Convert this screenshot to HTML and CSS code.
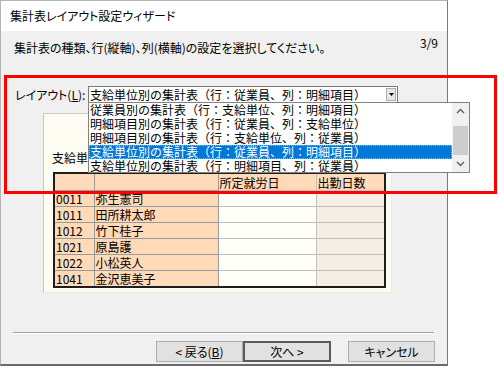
FILE: index.html
```html
<!DOCTYPE html>
<html lang="ja">
<head>
    <meta charset="UTF-8">
    <title>集計表レイアウト設定ウィザード</title>
    <link rel="stylesheet" href="styles.css">
</head>
<body>
    <div class="dialog">
        <div class="titlebar">集計表レイアウト設定ウィザード</div>

        <div class="panel-body">
            <div class="intro">
                <span class="intro-text">集計表の種類、行(縦軸)、列(横軸)の設定を選択してください。</span>
                <span class="step">3/9</span>
            </div>

            <div class="layout-row">
                <label class="layout-label">レイアウト(<u>L</u>):</label>
                <div class="combo">
                    <span class="combo-text">支給単位別の集計表（行：従業員、列：明細項目）</span>
                    <span class="combo-btn">
                        <svg width="5" height="3" viewBox="0 0 5 3"><path d="M0 0H5L2.5 3Z" fill="#000"/></svg>
                    </span>

                    <div class="droplist">
                        <ul class="items">
                            <li>従業員別の集計表（行：支給単位、列：明細項目）</li>
                            <li>明細項目別の集計表（行：従業員、列：支給単位）</li>
                            <li>明細項目別の集計表（行：支給単位、列：従業員）</li>
                            <li class="selected">支給単位別の集計表（行：従業員、列：明細項目）</li>
                            <li>支給単位別の集計表（行：明細項目、列：従業員）</li>
                        </ul>
                        <div class="scrollbar">
                            <span class="arrow">
                                <svg width="9" height="6" viewBox="0 0 9 6"><path d="M1 5L4.5 1.5L8 5" fill="none" stroke="#606060" stroke-width="1.4"/></svg>
                            </span>
                            <span class="thumb"></span>
                            <span class="arrow">
                                <svg width="9" height="6" viewBox="0 0 9 6"><path d="M1 1L4.5 4.5L8 1" fill="none" stroke="#606060" stroke-width="1.4"/></svg>
                            </span>
                        </div>
                    </div>
                </div>
            </div>

            <div class="preview">
                <div class="preview-title">支給単位別の集計表</div>
                <table class="grid">
                    <colgroup>
                        <col class="c-code"><col class="c-name"><col class="c-day"><col class="c-cnt">
                    </colgroup>
                    <tr class="head">
                        <td class="key"></td><td class="key"></td><td>所定就労日</td><td>出勤日数</td>
                    </tr>
                    <tr><td class="key">0011</td><td class="key">弥生憲司</td><td class="val"></td><td class="val2"></td></tr>
                    <tr><td class="key">1011</td><td class="key">田所耕太郎</td><td class="val"></td><td class="val2"></td></tr>
                    <tr><td class="key">1012</td><td class="key">竹下桂子</td><td class="val"></td><td class="val2"></td></tr>
                    <tr><td class="key">1021</td><td class="key">原島護</td><td class="val"></td><td class="val2"></td></tr>
                    <tr><td class="key">1022</td><td class="key">小松英人</td><td class="val"></td><td class="val2"></td></tr>
                    <tr><td class="key">1041</td><td class="key">金沢恵美子</td><td class="val"></td><td class="val2"></td></tr>
                </table>
            </div>

            <div class="separator"></div>

            <div class="buttons">
                <button type="button" class="btn">&lt; 戻る(<u>B</u>)</button>
                <button type="button" class="btn btn-default">次へ &gt;</button>
                <button type="button" class="btn btn-cancel">キャンセル</button>
            </div>
        </div>
    </div>

    <div class="highlight"></div>
</body>
</html>
```

FILE: styles.css
```css
body {
    margin: 0;
    background-color: #fff;
    font-family: "Noto Sans CJK JP", "Noto Sans", sans-serif;
    font-size: 12px;
    color: #000;
    position: relative;
    width: 498px;
    height: 367px;
    overflow: hidden;
}
.dialog {
    width: 448px;
    height: 366px;
    box-sizing: border-box;
    border-left: 1px solid #b4b4b4;
    border-top: 1px solid #b4b4b4;
    border-right: 1px solid #7a7a7a;
    border-bottom: 2px solid #6a6a6a;
    display: flex;
    flex-direction: column;
}
.titlebar {
    height: 30px;
    line-height: 30px;
    padding-left: 9px;
    background-color: #fff;
    font-feature-settings: "palt";
}
.panel-body {
    flex: 1;
    background-color: #f0f0f0;
}
.intro {
    display: flex;
    justify-content: space-between;
    padding: 3px 9px 0 13px;
    font-feature-settings: "palt";
}
.intro-text {
    margin-top: 5px;
    line-height: 17px;
}
.step {
    line-height: 17px;
}
.layout-row {
    display: flex;
    align-items: center;
    margin-top: 30px;
    padding-left: 14px;
}
.layout-label {
    width: 73px;
    font-feature-settings: "palt";
}
.combo {
    position: relative;
    width: 310px;
    height: 17px;
    box-sizing: border-box;
    border: 1px solid #7a7a7a;
    background-color: #fff;
    display: flex;
    align-items: center;
    z-index: 2;
}
.combo-text {
    padding-left: 1px;
    line-height: 15px;
    white-space: nowrap;
}
.combo-btn {
    margin-left: auto;
    margin-right: 1px;
    width: 10px;
    height: 13px;
    box-sizing: border-box;
    border: 1px solid #adadad;
    background-color: #e6e6e6;
    display: flex;
    align-items: center;
    justify-content: center;
}
.droplist {
    position: absolute;
    left: -1px;
    top: 15px;
    width: 382px;
    height: 71px;
    box-sizing: border-box;
    border: 1px solid #828282;
    background-color: #fff;
    display: flex;
}
.items {
    list-style: none;
    margin: 0;
    padding: 0;
    width: 363px;
}
.items li {
    height: 14px;
    line-height: 14px;
    padding-left: 1px;
    white-space: nowrap;
    overflow: hidden;
}
.items li.selected {
    background-color: #0078d7;
    color: #fff;
    outline: 1px dotted #f3a84a;
    outline-offset: -1px;
}
.scrollbar {
    width: 17px;
    background-color: #f0f0f0;
    display: flex;
    flex-direction: column;
}
.scrollbar .arrow {
    height: 17px;
    display: flex;
    align-items: center;
    justify-content: center;
}
.scrollbar .thumb {
    margin: 6px 1px 0;
    height: 30px;
    background-color: #cdcdcd;
}
.preview {
    margin: 10px 0 0 42px;
    width: 349px;
    height: 180px;
    box-sizing: border-box;
    border-left: 1px solid #c8c8c8;
    border-top: 1px solid #c8c8c8;
    border-right: 1px solid #ececdc;
    border-bottom: 1px solid #ececdc;
    background-color: #fcfcf2;
    padding: 35px 0 0 8px;
}
.preview-title {
    line-height: 17px;
    height: 17px;
}
.grid {
    margin: 6px 0 0 1px;
    border-collapse: collapse;
    table-layout: fixed;
    width: 331px;
    border: 2px solid #1e1e1e;
}
.c-code { width: 40px; }
.c-name { width: 124px; }
.c-day { width: 98px; }
.c-cnt { width: 69px; }
.grid td {
    height: 15px;
    line-height: 15px;
    padding: 0 0 0 1px;
    border: 1px solid #c0c0c0;
    white-space: nowrap;
    overflow: hidden;
}
.grid .head td {
    height: 16px;
    background-color: #ffdab9;
}
.grid td.key {
    background-color: #ffdab9;
    border-color: #9a9a9a;
}
.grid td.val {
    background-color: #fffff8;
}
.grid td.val2 {
    background-color: #f6ede5;
}
.separator {
    margin: 39px 0 0 12px;
    width: 421px;
    border-top: 1px solid #a0a0a0;
    border-bottom: 1px solid #fff;
}
.buttons {
    display: flex;
    justify-content: flex-end;
    margin-top: 7px;
    padding-right: 12px;
}
.btn {
    width: 87px;
    height: 21px;
    padding: 0;
    font-family: inherit;
    font-size: 12px;
    color: #000;
    background-color: #e1e1e1;
    border: 1px solid #adadad;
    font-feature-settings: "palt";
}
.btn-default {
    width: 88px;
    border: 2px solid #5a5a5a;
}
.btn-cancel {
    margin-left: 17px;
}
.highlight {
    position: absolute;
    left: 4px;
    top: 75px;
    width: 493px;
    height: 119px;
    box-sizing: border-box;
    border: 3px solid #ff0000;
    z-index: 5;
    pointer-events: none;
}
```
